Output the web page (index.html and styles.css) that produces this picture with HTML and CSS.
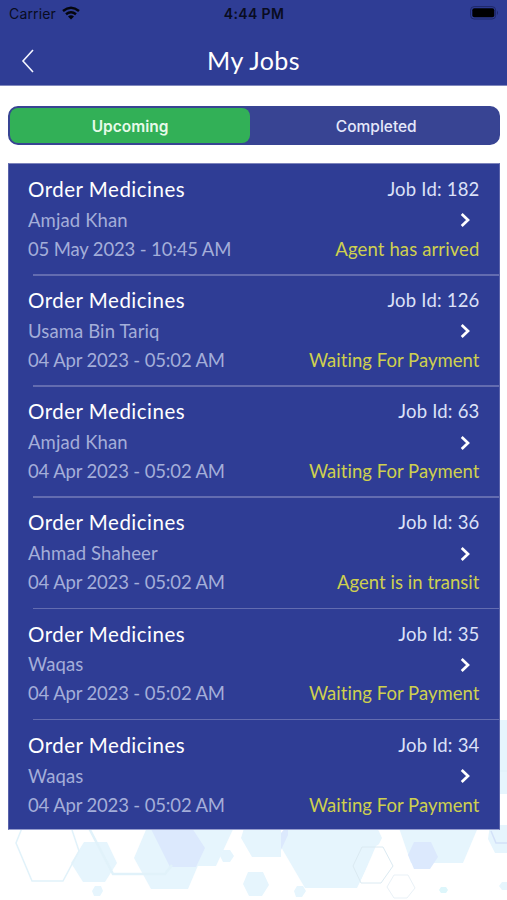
FILE: index.html
```html
<!DOCTYPE html>
<html lang="en">
<head>
<meta charset="utf-8">
<title>My Jobs</title>
<link rel="stylesheet" href="styles.css">
</head>
<body>
<svg class="backdrop" viewBox="0 0 507 260" aria-hidden="true">
  <g fill="#e6f5fd">
    <path d="M490 80H507V154H490Z"/>
    <path d="M84 202H107L117 223L105 242H83L71 223Z"/>
    <path d="M148 185H192L205 209L188 249H151L134 218Z"/>
    <path d="M180 185H235L216 226H169Z"/>
    <path d="M245 185H281V217L276 217H252L241 198Z"/>
    <path d="M287 185H376L382 198L357 248H305L281 207Z"/>
    <path d="M398 185H479L463 223H411Z"/>
    <path d="M490 185H507V213H495L488 199Z"/>
    <path d="M248 232H263L269 245L262 256H249L243 244Z"/>
    <path d="M223 210H230L234 216L230 222H223L220 216Z"/>
    <path d="M95 246H101L103 251L100 256H94L92 251Z"/>
    <path d="M297 246H303L306 251L302 257H296L294 251Z"/>
    <path d="M502 242H507V250H502L499 246Z"/>
    <path d="M441 247H446L448 250L446 253H441L439 250Z" fill="#ddf6fb"/>
  </g>
  <g fill="#dce9fd">
    <path d="M149 185H190L205 208L196 227H170Z"/>
    <path d="M414 202H431L438 217L430 229H414L408 215Z"/>
    <path d="M281 193L288 185V195L281 210Z"/>
  </g>
  <path d="M376 206L383 202L393 226L381 243H360Z" fill="#fff"/>
  <g fill="none" stroke="#e1f2fa" stroke-width="1.5">
    <path d="M22 188L16 203L32 241H63L79 211L72 190"/>
    <path d="M89 188L113 234H165L172 225" stroke-width="2.5"/>
    <path d="M362 207H383L393 226L381 243H361L353 226Z" stroke="#dbeaf2" stroke-width="1"/>
    <path d="M394 235H408L415 248L407 258H394L387 247Z" stroke="#e9f1f7" stroke-width="1"/>
    <path d="M491 191L496 203H507" stroke="#d3e1f8"/>
    <path d="M498 131H507"/>
  </g>
</svg>

<header class="header">
  <div class="status">
    <div class="carrier"><span>Carrier</span>
      <svg class="wifi" viewBox="0 0 18 14"><g fill="none" stroke="#05060d" stroke-width="2.5"><path d="M1 5Q9 -1.5 17 5"/><path d="M4 8.3Q9 4.2 14 8.3"/></g><path d="M6 10.4Q9 8 12 10.4L9 13.5Z" fill="#05060d"/></svg>
    </div>
    <div class="clock">4:44 PM</div>
    <svg class="battery" viewBox="0 0 29 14"><rect x=".6" y=".6" width="25" height="12.4" rx="3.5" fill="none" stroke="#1e2868"/><rect x="2.3" y="2.3" width="22" height="9" rx="2" fill="#000"/><path d="M27 4.5Q29 6.8 27 9Z" fill="#1e2868"/></svg>
  </div>
  <div class="nav">
    <svg class="back" viewBox="0 0 14 26"><path d="M12 2L2 13L12 24" fill="none" stroke="#f4f5ff" stroke-width="1.6"/></svg>
    <h1>My Jobs</h1>
  </div>
</header>

<main>
  <div class="tabs"><div class="tab active">Upcoming</div><div class="tab completed">Completed</div></div>
  <div class="jobs">
    <article class="job"><h2>Order Medicines</h2><p class="id">Job Id: 182</p><p class="name">Amjad Khan</p><svg class="chevron" viewBox="0 0 10 16"><path d="M1.7 2L8 8L1.7 14"/></svg><p class="date">05 May 2023 - 10:45 AM</p><p class="state arrived">Agent has arrived</p></article>
    <article class="job"><h2>Order Medicines</h2><p class="id">Job Id: 126</p><p class="name">Usama Bin Tariq</p><svg class="chevron" viewBox="0 0 10 16"><path d="M1.7 2L8 8L1.7 14"/></svg><p class="date">04 Apr 2023 - 05:02 AM</p><p class="state">Waiting For Payment</p></article>
    <article class="job"><h2>Order Medicines</h2><p class="id">Job Id: 63</p><p class="name">Amjad Khan</p><svg class="chevron" viewBox="0 0 10 16"><path d="M1.7 2L8 8L1.7 14"/></svg><p class="date">04 Apr 2023 - 05:02 AM</p><p class="state">Waiting For Payment</p></article>
    <article class="job"><h2>Order Medicines</h2><p class="id">Job Id: 36</p><p class="name">Ahmad Shaheer</p><svg class="chevron" viewBox="0 0 10 16"><path d="M1.7 2L8 8L1.7 14"/></svg><p class="date">04 Apr 2023 - 05:02 AM</p><p class="state">Agent is in transit</p></article>
    <article class="job"><h2>Order Medicines</h2><p class="id">Job Id: 35</p><p class="name">Waqas</p><svg class="chevron" viewBox="0 0 10 16"><path d="M1.7 2L8 8L1.7 14"/></svg><p class="date">04 Apr 2023 - 05:02 AM</p><p class="state">Waiting For Payment</p></article>
    <article class="job"><h2>Order Medicines</h2><p class="id">Job Id: 34</p><p class="name">Waqas</p><svg class="chevron" viewBox="0 0 10 16"><path d="M1.7 2L8 8L1.7 14"/></svg><p class="date">04 Apr 2023 - 05:02 AM</p><p class="state">Waiting For Payment</p></article>
  </div>
</main>
</body>
</html>
```
FILE: styles.css
```css
* { box-sizing: border-box; }
body { margin: 0; height: 900px; overflow: hidden; position: relative; background: #fff; font-family: Lato, sans-serif; font-variant-ligatures: none; }
h1, h2, p { margin: 0; font-weight: 400; }
svg { display: block; }
.backdrop { position: absolute; left: 0; bottom: 0; width: 507px; height: 260px; z-index: -1; }
.header { height: 86px; background: #2f3d95; border-bottom: 1px solid #8088bd; }
.status { height: 28px; padding: 0 8px 2px 9px; display: grid; grid-template-columns: 1fr auto 1fr; align-items: center; font-family: Inter, sans-serif; font-size: 14px; color: #090c20; }
.carrier { display: flex; align-items: center; gap: 6px; letter-spacing: .15px; }
.wifi { width: 18px; height: 14px; }
.clock { font-weight: 600; letter-spacing: .35px; }
.battery { width: 29px; height: 14px; justify-self: end; }
.nav { height: 57px; display: grid; grid-template-columns: 60px 1fr 60px; align-items: center; padding-top: 9px; }
.back { width: 14px; height: 26px; margin-left: 21px; }
.nav h1 { font-size: 25px; line-height: 30px; letter-spacing: .4px; color: #fff; text-align: center; margin-top: -3px; }
main { width: 507px; padding: 20px 7.5px 0 8px; }
.tabs { height: 39px; border: 2px solid #384493; border-radius: 10px; background: #384493; display: grid; grid-template-columns: 240px 1fr; margin-bottom: 18px; }
.tab { display: flex; align-items: center; justify-content: center; color: #e5e8fa; font: 500 15.5px Inter, sans-serif; border-radius: 8px; padding-top: 1px; }
.tab.completed { padding-left: 5px; }
.tab.active { background: #32b057; font-weight: 600; color: #e7fae9; }
.jobs { background: #2f3d95; border: 1px solid #5962aa; border-top-color: #7d84bc; border-bottom-color: #969dcd; height: 667px; }
.job { height: 111.2px; padding: 8.6px 19px 0; display: grid; grid-template-columns: 1fr auto; grid-template-rows: 32.6px 29px 29px; align-items: center; font-size: 18.5px; position: relative; }
.job:not(:last-child)::after { content: ""; position: absolute; left: 24px; right: 0; bottom: -.4px; height: 1.6px; background: #636cb0; }
.job h2 { font-size: 20.5px; letter-spacing: .5px; color: #fff; }
.id { color: #dce1f8; text-align: right; letter-spacing: .2px; }
.name, .date { color: #a4aed9; }
.name { letter-spacing: .12px; }
.date { letter-spacing: -.15px; }
.state { color: #ced04f; text-align: right; letter-spacing: .04px; }
.state.arrived { letter-spacing: .12px; }
.chevron { width: 10px; height: 16px; justify-self: end; margin: 1px 10px 0 0; fill: none; stroke: #fff; stroke-width: 2.7; }
```
